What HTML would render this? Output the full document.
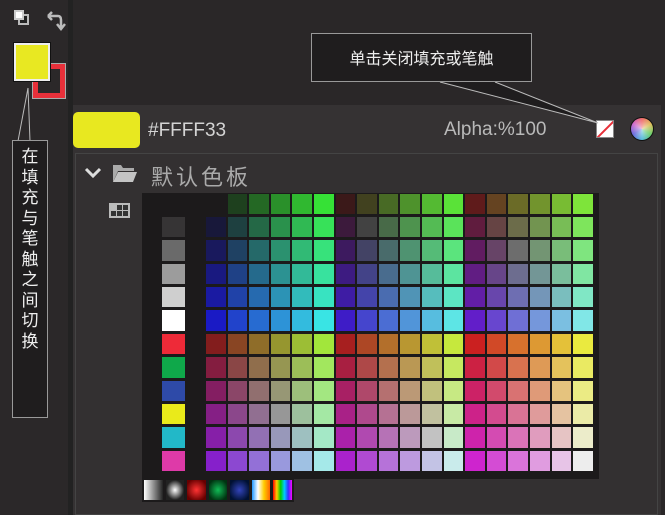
<!DOCTYPE html>
<html><head><meta charset="utf-8"><style>
*{margin:0;padding:0;box-sizing:border-box}
body{width:665px;height:515px;background:#2a2728;position:relative;overflow:hidden;font-family:"Liberation Sans","Noto Sans CJK SC",sans-serif}
.abs{position:absolute}
#grid{position:absolute;left:205px;top:192px;display:grid;grid-template-columns:repeat(18,21.6px);grid-template-rows:repeat(12,23.4px)}
#grid i,#lc i{display:block;margin:1.5px 1px}
#lc{position:absolute;left:161px;top:192px;display:grid;grid-template-rows:repeat(12,23.4px);width:25px}
</style></head><body>
<div class="abs" style="left:0;top:0;width:68px;height:515px;background:#2b2829"></div>
<div class="abs" style="left:68px;top:0;width:5px;height:515px;background:#222"></div>
<div class="abs" style="left:73px;top:105px;width:592px;height:410px;background:#353233"></div>
<div class="abs" style="left:661px;top:105px;width:4px;height:410px;background:#2a2728"></div>
<div class="abs" style="left:75px;top:153px;width:583px;height:362px;border:1px solid #444;background:#333031"></div>
<div class="abs" style="left:18px;top:14px;width:11px;height:11px;border:2px solid #bbb;background:#222"></div>
<div class="abs" style="left:14px;top:10px;width:10px;height:10px;border:2px solid #ccc;background:#fff"></div>
<svg class="abs" style="left:44px;top:10px" width="22" height="22"><path d="M4 6 H14 Q17 6 17 10 V18 M13 14 L17 19 L21 14 M4 6 L8 2 M4 6 L8 10" stroke="#bbb" stroke-width="2.5" fill="none"/></svg>
<div class="abs" style="left:33px;top:64px;width:32px;height:34px;border:5px solid #e8303a;outline:1px solid #aaa;background:#2b2829"></div>
<div class="abs" style="left:14px;top:43px;width:36px;height:38px;background:#e8e822;border:2px solid #eee;outline:1px solid #111"></div>
<div class="abs" style="left:73px;top:112px;width:67px;height:36px;background:#e8e820;border-radius:5px"></div>
<div class="abs" style="left:148px;top:120px;color:#d4d4d4;font-size:19px">#FFFF33</div>
<div class="abs" style="left:444px;top:119px;color:#b9b9b9;font-size:19px">Alpha:%100</div>
<div class="abs" style="left:596px;top:120px;width:18px;height:18px;background:#fff;border:1px solid #888;overflow:hidden"><div style="position:absolute;left:-4px;top:7px;width:26px;height:2px;background:#e8303a;transform:rotate(-45deg)"></div></div>
<div class="abs" style="left:631px;top:118px;width:22px;height:22px;border-radius:50%;background:radial-gradient(rgba(255,255,255,.6),rgba(255,255,255,0) 70%),conic-gradient(#e66,#db5,#6c6,#5bd,#66d,#c6c,#e66);box-shadow:0 0 0 1px #111"></div>
<svg class="abs" style="left:84px;top:166px" width="18" height="14"><path d="M2 3 L9 10 L16 3" stroke="#ddd" stroke-width="3" fill="none"/></svg>
<svg class="abs" style="left:112px;top:163px" width="26" height="20"><path d="M1 2 H9 L11 5 H22 V8 H6 L1 19 Z" fill="#aaa"/><path d="M6 9 H25 L21 19 H1 Z" fill="#c4c4c4"/></svg>
<div class="abs" style="left:151px;top:160px;color:#aaa;font-size:22px;letter-spacing:3px">默认色板</div>
<div class="abs" style="left:109px;top:203px;width:21px;height:15px;background:#bbb;display:grid;grid-template-columns:repeat(3,1fr);gap:1px;padding:2px"><i style="background:#bbb"></i><i style="background:#333"></i><i style="background:#333"></i><i style="background:#333"></i><i style="background:#333"></i><i style="background:#333"></i></div>
<div class="abs" style="left:142px;top:193px;width:457px;height:286px;background:#1c1a1b"></div>
<div id="lc"><i style="background:transparent"></i><i style="background:#363435"></i><i style="background:#6a6a6a"></i><i style="background:#9c9c9c"></i><i style="background:#cfcfcf"></i><i style="background:#fff"></i><i style="background:#ee2a38"></i><i style="background:#0fa84a"></i><i style="background:#2e4aa8"></i><i style="background:#eaea1a"></i><i style="background:#22b8c8"></i><i style="background:#de3aa8"></i></div>
<div id="grid" style="filter:contrast(.82) saturate(.8) brightness(1.02)">
<i style="background:transparent"></i><i style="background:#030"></i><i style="background:#060"></i><i style="background:#090"></i><i style="background:#0c0"></i><i style="background:#0f0"></i><i style="background:#300"></i><i style="background:#330"></i><i style="background:#360"></i><i style="background:#390"></i><i style="background:#3c0"></i><i style="background:#3f0"></i><i style="background:#600"></i><i style="background:#630"></i><i style="background:#660"></i><i style="background:#690"></i><i style="background:#6c0"></i><i style="background:#6f0"></i>
<i style="background:#003"></i><i style="background:#033"></i><i style="background:#063"></i><i style="background:#093"></i><i style="background:#0c3"></i><i style="background:#0f3"></i><i style="background:#303"></i><i style="background:#333"></i><i style="background:#363"></i><i style="background:#393"></i><i style="background:#3c3"></i><i style="background:#3f3"></i><i style="background:#603"></i><i style="background:#633"></i><i style="background:#663"></i><i style="background:#693"></i><i style="background:#6c3"></i><i style="background:#6f3"></i>
<i style="background:#006"></i><i style="background:#036"></i><i style="background:#066"></i><i style="background:#096"></i><i style="background:#0c6"></i><i style="background:#0f6"></i><i style="background:#306"></i><i style="background:#336"></i><i style="background:#366"></i><i style="background:#396"></i><i style="background:#3c6"></i><i style="background:#3f6"></i><i style="background:#606"></i><i style="background:#636"></i><i style="background:#666"></i><i style="background:#696"></i><i style="background:#6c6"></i><i style="background:#6f6"></i>
<i style="background:#009"></i><i style="background:#039"></i><i style="background:#069"></i><i style="background:#099"></i><i style="background:#0c9"></i><i style="background:#0f9"></i><i style="background:#309"></i><i style="background:#339"></i><i style="background:#369"></i><i style="background:#399"></i><i style="background:#3c9"></i><i style="background:#3f9"></i><i style="background:#609"></i><i style="background:#639"></i><i style="background:#669"></i><i style="background:#699"></i><i style="background:#6c9"></i><i style="background:#6f9"></i>
<i style="background:#00c"></i><i style="background:#03c"></i><i style="background:#06c"></i><i style="background:#09c"></i><i style="background:#0cc"></i><i style="background:#0fc"></i><i style="background:#30c"></i><i style="background:#33c"></i><i style="background:#36c"></i><i style="background:#39c"></i><i style="background:#3cc"></i><i style="background:#3fc"></i><i style="background:#60c"></i><i style="background:#63c"></i><i style="background:#66c"></i><i style="background:#69c"></i><i style="background:#6cc"></i><i style="background:#6fc"></i>
<i style="background:#00f"></i><i style="background:#03f"></i><i style="background:#06f"></i><i style="background:#09f"></i><i style="background:#0cf"></i><i style="background:#0ff"></i><i style="background:#30f"></i><i style="background:#33f"></i><i style="background:#36f"></i><i style="background:#39f"></i><i style="background:#3cf"></i><i style="background:#3ff"></i><i style="background:#60f"></i><i style="background:#63f"></i><i style="background:#66f"></i><i style="background:#69f"></i><i style="background:#6cf"></i><i style="background:#6ff"></i>
<i style="background:#900"></i><i style="background:#930"></i><i style="background:#960"></i><i style="background:#990"></i><i style="background:#9c0"></i><i style="background:#9f0"></i><i style="background:#c00"></i><i style="background:#c30"></i><i style="background:#c60"></i><i style="background:#c90"></i><i style="background:#cc0"></i><i style="background:#cf0"></i><i style="background:#f00"></i><i style="background:#f30"></i><i style="background:#f60"></i><i style="background:#f90"></i><i style="background:#fc0"></i><i style="background:#ff0"></i>
<i style="background:#903"></i><i style="background:#933"></i><i style="background:#963"></i><i style="background:#993"></i><i style="background:#9c3"></i><i style="background:#9f3"></i><i style="background:#c03"></i><i style="background:#c33"></i><i style="background:#c63"></i><i style="background:#c93"></i><i style="background:#cc3"></i><i style="background:#cf3"></i><i style="background:#f03"></i><i style="background:#f33"></i><i style="background:#f63"></i><i style="background:#f93"></i><i style="background:#fc3"></i><i style="background:#ff3"></i>
<i style="background:#906"></i><i style="background:#936"></i><i style="background:#966"></i><i style="background:#996"></i><i style="background:#9c6"></i><i style="background:#9f6"></i><i style="background:#c06"></i><i style="background:#c36"></i><i style="background:#c66"></i><i style="background:#c96"></i><i style="background:#cc6"></i><i style="background:#cf6"></i><i style="background:#f06"></i><i style="background:#f36"></i><i style="background:#f66"></i><i style="background:#f96"></i><i style="background:#fc6"></i><i style="background:#ff6"></i>
<i style="background:#909"></i><i style="background:#939"></i><i style="background:#969"></i><i style="background:#999"></i><i style="background:#9c9"></i><i style="background:#9f9"></i><i style="background:#c09"></i><i style="background:#c39"></i><i style="background:#c69"></i><i style="background:#c99"></i><i style="background:#cc9"></i><i style="background:#cf9"></i><i style="background:#f09"></i><i style="background:#f39"></i><i style="background:#f69"></i><i style="background:#f99"></i><i style="background:#fc9"></i><i style="background:#ff9"></i>
<i style="background:#90c"></i><i style="background:#93c"></i><i style="background:#96c"></i><i style="background:#99c"></i><i style="background:#9cc"></i><i style="background:#9fc"></i><i style="background:#c0c"></i><i style="background:#c3c"></i><i style="background:#c6c"></i><i style="background:#c9c"></i><i style="background:#ccc"></i><i style="background:#cfc"></i><i style="background:#f0c"></i><i style="background:#f3c"></i><i style="background:#f6c"></i><i style="background:#f9c"></i><i style="background:#fcc"></i><i style="background:#ffc"></i>
<i style="background:#90f"></i><i style="background:#93f"></i><i style="background:#96f"></i><i style="background:#99f"></i><i style="background:#9cf"></i><i style="background:#9ff"></i><i style="background:#c0f"></i><i style="background:#c3f"></i><i style="background:#c6f"></i><i style="background:#c9f"></i><i style="background:#ccf"></i><i style="background:#cff"></i><i style="background:#f0f"></i><i style="background:#f3f"></i><i style="background:#f6f"></i><i style="background:#f9f"></i><i style="background:#fcf"></i><i style="background:#fff"></i>
</div>
<div class="abs" style="left:142px;top:478px;width:152px;height:24px;background:#1c1a1b;display:flex;gap:3px;padding:2px">
<i style="width:19px;background:linear-gradient(90deg,#fff,#222)"></i>
<i style="width:19px;background:radial-gradient(#fff,#222 70%)"></i>
<i style="width:19px;background:radial-gradient(#f33,#600 80%)"></i>
<i style="width:19px;background:radial-gradient(#1b5,#031 80%)"></i>
<i style="width:19px;background:radial-gradient(#34b,#013 80%)"></i>
<i style="width:19px;background:linear-gradient(90deg,#29f,#fff,#fc0,#f60)"></i>
<i style="width:19px;background:linear-gradient(90deg,#f00,#fc0,#0c0,#0cf,#33f,#f0f)"></i>
</div>
<svg class="abs" style="left:0;top:0" width="665" height="515"><path d="M28 88 L18 141 M28 88 L30 141" stroke="#bbb" fill="#1f1d1e"/><path d="M440 82 L598 123 L495 82" stroke="#bbb" fill="#1f1d1e"/></svg>
<div class="abs" style="left:12px;top:140px;width:36px;height:278px;background:#1f1d1e;border:1px solid #999;color:#eee;font-size:17px;line-height:20.5px;text-align:center;padding-top:4px;font-family:'Noto Sans CJK SC',sans-serif">在<br>填<br>充<br>与<br>笔<br>触<br>之<br>间<br>切<br>换</div>
<div class="abs" style="left:311px;top:33px;width:221px;height:49px;background:#1f1d1e;border:1px solid #999;color:#eee;font-size:16px;line-height:47px;text-align:center;font-family:'Noto Sans CJK SC',sans-serif">单击关闭填充或笔触</div>
</body></html>
